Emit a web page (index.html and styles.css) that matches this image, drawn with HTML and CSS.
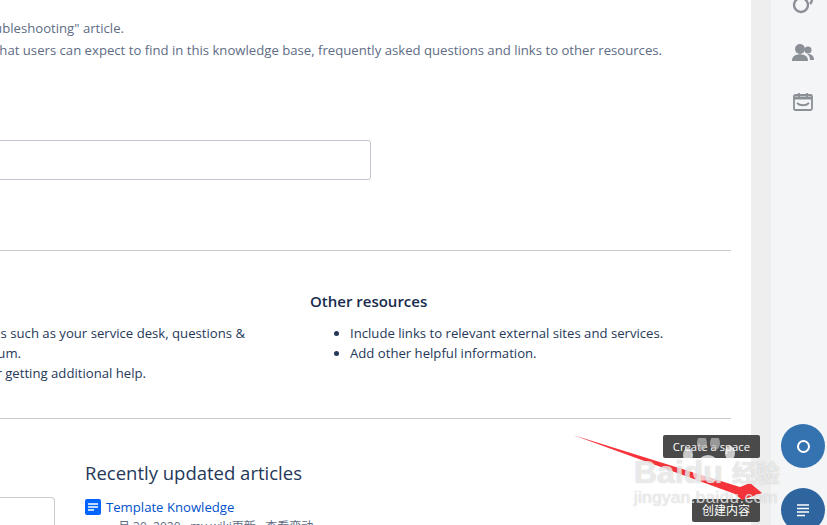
FILE: index.html
```html
<!DOCTYPE html>
<html lang="en">
<head>
  <meta charset="UTF-8">
  <title>Knowledge base</title>
  <link rel="stylesheet" href="styles.css">
</head>
<body>
  <div class="page">
    <main class="content">
      <div class="intro">
        <div class="end-line end-short"><span>For more tips, read the "Troubleshooting" article.</span></div>
        <div class="end-line end-long"><span>Outline what users can expect to find in this knowledge base, frequently asked questions and links to other resources.</span></div>
      </div>
      <div class="search-box"></div>
      <hr class="rule">
      <div class="columns">
        <div class="col-left">
          <div class="end-line end-a"><span>Add links to support channels such as your service desk, questions &amp;</span></div>
          <div class="end-line end-b"><span>answers or a community forum.</span></div>
          <div class="end-line end-c"><span>Add instructions for getting additional help.</span></div>
        </div>
        <div class="col-right">
          <h3>Other resources</h3>
          <ul>
            <li>Include links to relevant external sites and services.</li>
            <li>Add other helpful information.</li>
          </ul>
        </div>
      </div>
      <hr class="rule rule-low">
      <div class="recent">
        <div class="side-card"></div>
        <div class="recent-list">
          <h2>Recently updated articles</h2>
          <a class="article" href="#">
            <svg width="16" height="16" viewBox="0 0 16 16"><rect width="16" height="16" rx="2" fill="#0065ff"/><path d="M3 5h10M3 8h10M3 11h6" stroke="#fff" stroke-width="1.5"/></svg>
            Template Knowledge
          </a>
          <div class="meta">月 30, 2020 · my wiki更新 · 查看变动</div>
        </div>
      </div>
    </main>
    <div class="gutter"></div>
    <aside class="sidebar">
      <svg class="side-icon side-icon-top" width="22" height="22" viewBox="0 0 22 22" fill="none" stroke="#8b8f96" stroke-width="2.4"><circle cx="9" cy="11" r="7"/><path d="M18 10c1-1 2-2 2-5"/></svg>
      <svg class="side-icon" width="22" height="20" viewBox="0 0 22 20" fill="#8b8f96"><circle cx="8" cy="6" r="5"/><path d="M0 18c0-5 3-6 8-7 5 1 8 2 8 7z"/><circle cx="16" cy="7" r="3.5"/><path d="M15 11c4 0 7 1 7 6h-4c0-3-1-5-3-6z"/></svg>
      <svg class="side-icon" width="20" height="20" viewBox="0 0 20 20" fill="none" stroke="#8b8f96" stroke-width="1.8"><rect x="1" y="3" width="18" height="15" rx="1.5"/><path d="M1 6h18" stroke-width="3"/><path d="M6 1v4M14 1v4" /><path d="M4 11c3 3 9 3 12 0"/></svg>
    </aside>

    <div class="fab fab-top"><span class="ring"></span></div>
    <div class="fab fab-bottom">
      <svg width="14" height="14" viewBox="0 0 14 14" stroke="#fff" stroke-width="1.6"><path d="M1 2h12M1 5.5h12M1 9h12M1 12.5h8"/></svg>
    </div>
    <div class="tip tip-top">Create a space</div>
    <div class="tip tip-bottom">创建内容</div>

    <svg class="arrow" width="200" height="70" viewBox="0 0 200 70"><path d="M0 0 L167 52 L177 48 L189 58 L169 65 L162 59 Z" fill="#f5333a"/></svg>

    <div class="watermark">
      <svg class="paw" width="52" height="46" viewBox="0 0 52 46" fill="#fff"><ellipse cx="5" cy="17" rx="5" ry="7"/><ellipse cx="19" cy="5" rx="5" ry="7" fill="#bbb"/><ellipse cx="32" cy="5" rx="5" ry="7" fill="#bbb"/><ellipse cx="47" cy="15" rx="5" ry="7"/><path d="M25 17c8 0 15 11 15 18 0 9-9 8-15 7-6 1-15 2-15-7 0-7 7-18 15-18z"/></svg>
      <div class="wm-main"><span class="wm-brand">Baidu</span><span class="wm-cn">经验</span></div>
      <div class="wm-url">jingyan.baidu.com</div>
    </div>
  </div>
</body>
</html>
```

FILE: styles.css
```css
html, body {
  margin: 0;
  height: 100%;
  overflow: hidden;
}

body {
  font-family: "Open Sans", "Noto Sans CJK SC", sans-serif;
  font-size: 13.15px;
  color: #253858;
}

.page {
  position: relative;
  display: flex;
  width: 827px;
  height: 525px;
  overflow: hidden;
  background: #fff;
}

.content {
  width: 751px;
  flex: none;
  box-sizing: border-box;
  padding-top: 17px;
}

.gutter {
  width: 20px;
  flex: none;
  background: #eeeeee;
}

.sidebar {
  flex: 1;
  background: #f4f5f7;
  display: flex;
  flex-direction: column;
  align-items: center;
  gap: 29px;
  padding-left: 8px;
}

.side-icon {
  display: block;
}

.side-icon-top {
  margin: -6px 0 -2px;
}

/* lines cut off by the left edge, anchored on their right end */
.end-line {
  display: flex;
  justify-content: flex-end;
  white-space: nowrap;
  line-height: 20px;
}

.intro {
  color: #5e6c84;
}

.intro .end-line {
  line-height: 22px;
}

.end-short { width: 124px; }
.end-long { width: 662px; }
.end-a { width: 245px; }
.end-b { width: 21px; }
.end-c { width: 146px; }

.search-box {
  margin: 79px 0 0 -10px;
  width: 379px;
  height: 38px;
  border: 1px solid #c1c7d0;
  border-radius: 3px;
}

.rule {
  width: 731px;
  margin: 70px 0 0;
  border: none;
  border-top: 1px solid #ccc;
}

.rule-low {
  margin-top: 35px;
}

.columns {
  display: flex;
  margin-top: 40px;
}

.col-left {
  width: 310px;
  flex: none;
  padding-top: 32px;
}

.col-right h3 {
  margin: 0 0 12px;
  font-size: 15px;
  line-height: 20px;
  font-weight: 600;
  color: #172b4d;
}

.col-right ul {
  margin: 0;
  padding-left: 40px;
}

.col-right li {
  line-height: 20px;
}

.recent {
  display: flex;
  gap: 30px;
}

.side-card {
  width: 55px;
  height: 60px;
  flex: none;
  box-sizing: border-box;
  margin-top: 78px;
  border: 1px solid #ccc;
  border-left: none;
  border-radius: 0 4px 0 0;
}

.recent-list h2 {
  margin: 40px 0 0;
  font-size: 18.5px;
  line-height: 28px;
  font-weight: 400;
}

.article {
  display: flex;
  align-items: center;
  gap: 5px;
  margin-top: 10px;
  color: #0052cc;
  text-decoration: none;
  line-height: 20px;
}

.meta {
  margin: 0 0 0 33px;
  white-space: nowrap;
  color: #5e6c84;
  font-size: 12px;
}

.fab {
  position: absolute;
  left: 781px;
  width: 44px;
  height: 44px;
  border-radius: 50%;
  display: flex;
  align-items: center;
  justify-content: center;
}

.fab-top {
  top: 424px;
  background: #3572b0;
}

.fab-bottom {
  top: 488px;
  background: #2f659f;
}

.ring {
  width: 9px;
  height: 9px;
  border: 2px solid #fff;
  border-radius: 50%;
}

.tip {
  position: absolute;
  height: 23px;
  line-height: 23px;
  padding: 0 10px;
  background: #4a4a4a;
  color: #fff;
  font-size: 11.3px;
  border-radius: 2px;
  white-space: nowrap;
}

.tip-top {
  right: 67px;
  top: 435px;
}

.tip-bottom {
  right: 67px;
  top: 499px;
  font-size: 12px;
}

.arrow {
  position: absolute;
  left: 573px;
  top: 435px;
}

.watermark {
  position: absolute;
  left: 634px;
  top: 436px;
  width: 146px;
  color: rgba(255, 255, 255, 0.7);
  text-shadow: 0 0 1px rgba(120, 120, 120, 0.5);
}

.paw {
  position: absolute;
  left: 49px;
  top: 2px;
  opacity: 0.7;
}

.wm-main {
  position: relative;
  display: flex;
  align-items: center;
  justify-content: space-between;
  padding-top: 19px;
}

.wm-brand {
  font: 700 32px/34px "Liberation Sans", sans-serif;
}

.wm-cn {
  font: 700 24px/34px "Noto Sans CJK SC", sans-serif;
}

.wm-url {
  position: relative;
  font: 400 17px/18px "Liberation Sans", sans-serif;
  letter-spacing: 0.4px;
}
```
